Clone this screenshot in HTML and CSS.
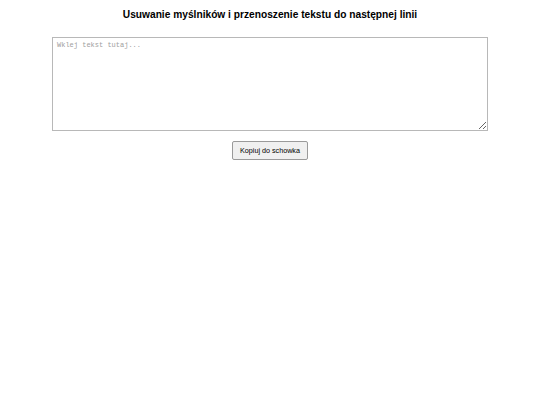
FILE: index.html
```html
<!DOCTYPE html>
<html lang="pl">
<head>
<meta charset="utf-8">
<title>Usuwanie myślników</title>
<link rel="stylesheet" href="styles.css">
</head>
<body>
<main class="page">
  <h1 class="title">Usuwanie myślników i przenoszenie tekstu do następnej linii</h1>
  <textarea class="input" placeholder="Wklej tekst tutaj..."></textarea>
  <button class="copy" type="button">Kopiuj do schowka</button>
</main>
</body>
</html>
```
FILE: styles.css
```css
html, body {
  margin: 0;
  padding: 0;
  background: #ffffff;
}
.page {
  font-family: "Liberation Sans", Arial, sans-serif;
  display: flex;
  flex-direction: column;
  align-items: center;
  padding-top: 8px;
}
.title {
  margin: 0;
  font-size: 10.2px;
  font-weight: bold;
  color: #000;
  line-height: 14px;
}
.input {
  box-sizing: border-box;
  margin-top: 15px;
  width: 436px;
  height: 94px;
  border: 1px solid #b8b8b8;
  padding: 3px 4px;
  font-family: "Liberation Mono", "DejaVu Sans Mono", monospace;
  font-size: 7px;
  resize: vertical;
}
.input::placeholder {
  color: #a0a0a0;
}
.copy {
  margin-top: 10px;
  box-sizing: border-box;
  width: 76px;
  height: 19px;
  font-family: "Liberation Sans", Arial, sans-serif;
  font-size: 7.2px;
  color: #000;
  background: #f0f0f0;
  border: 1px solid #9a9a9a;
  border-radius: 2px;
  padding: 0;
}
```
